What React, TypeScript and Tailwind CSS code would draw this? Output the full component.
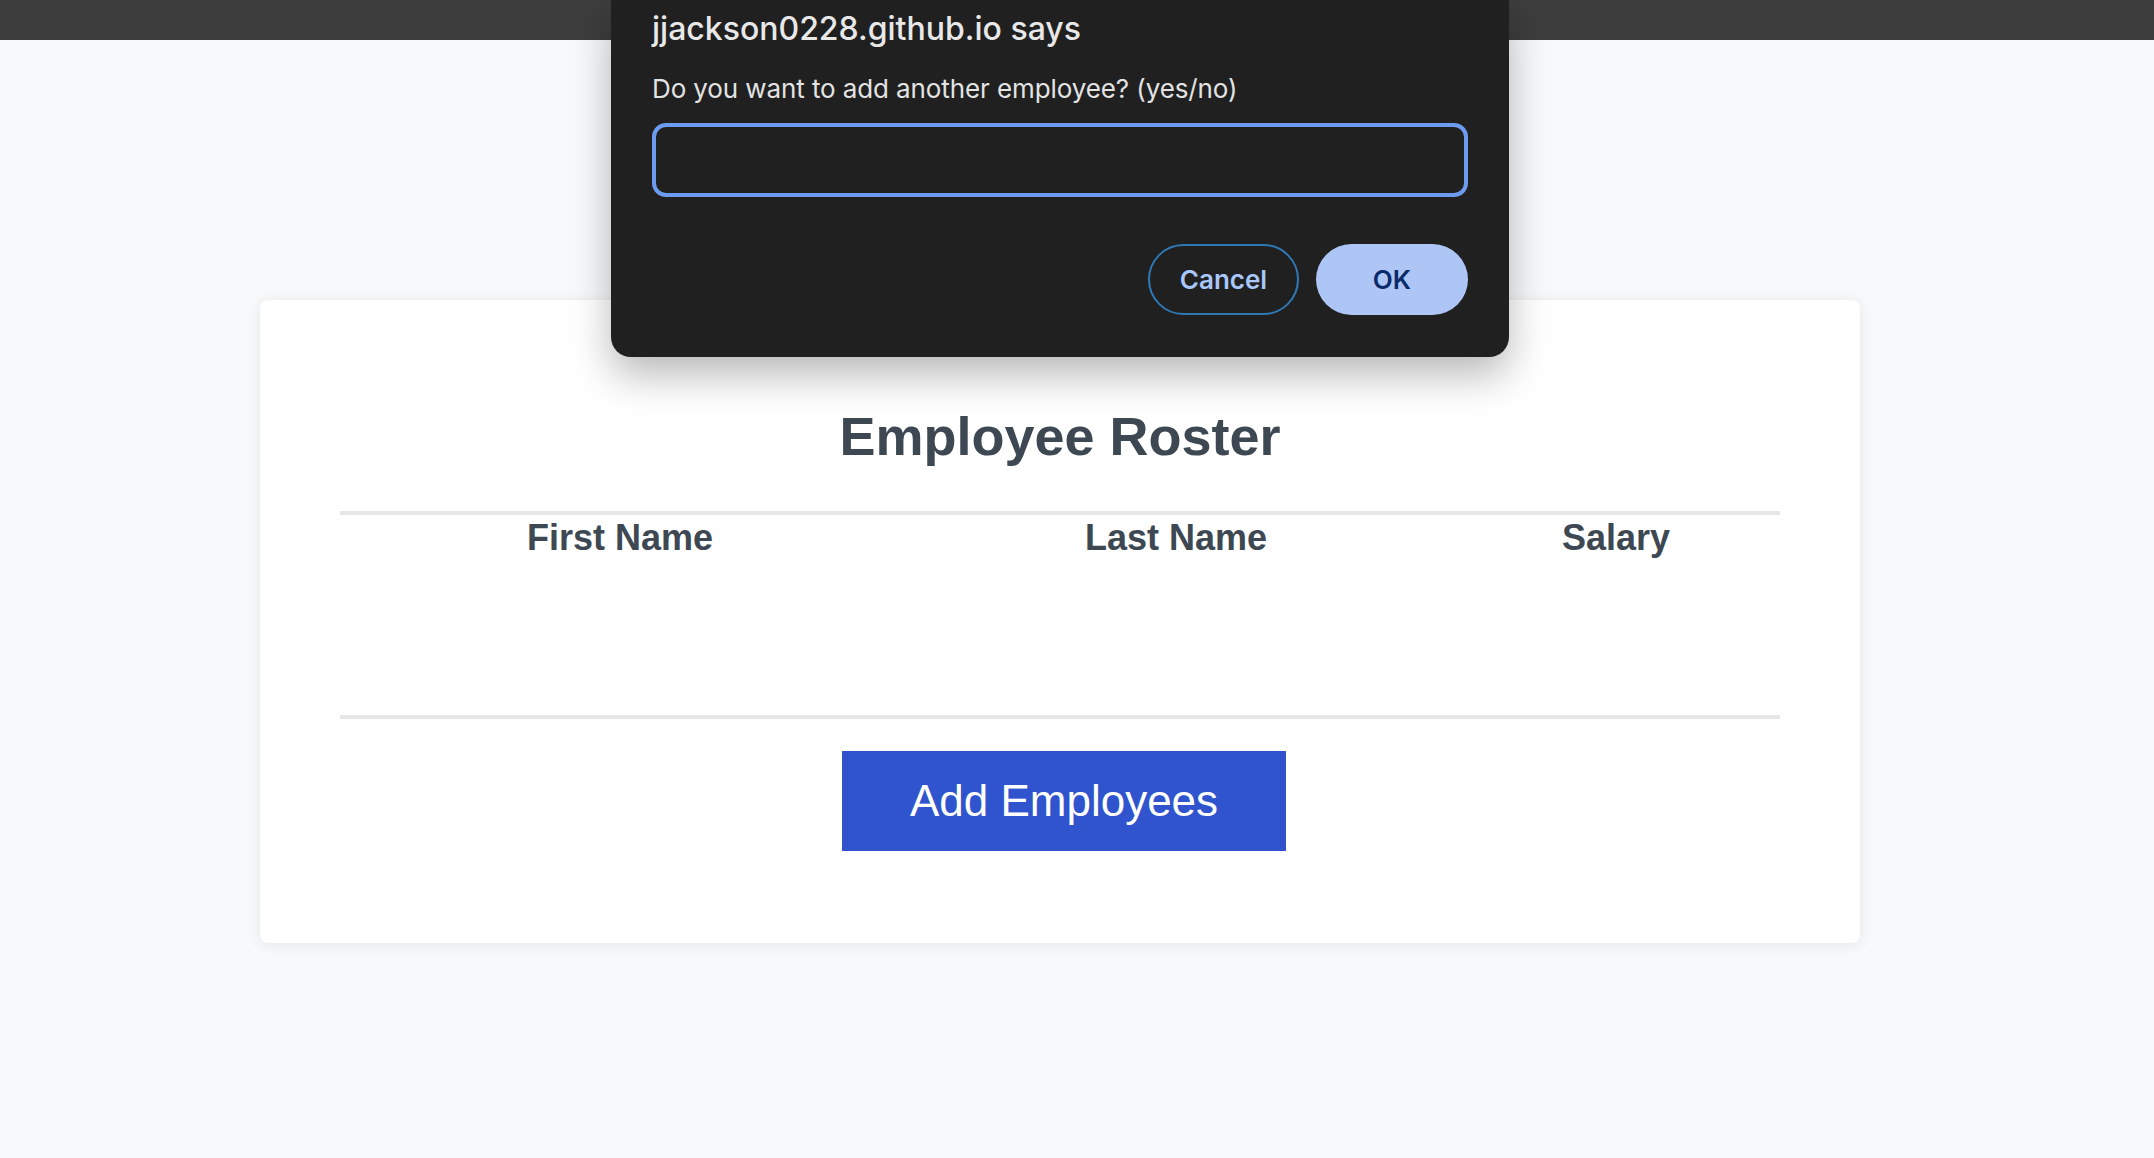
import React from "react"

const columns = ["First Name", "Last Name", "Salary"]

function PromptDialog() {
  return (
    <div className="absolute left-[611px] top-0 w-[898px] rounded-b-[20px] bg-[#202020] px-[41px] pt-[10px] pb-[42px] shadow-[0_18px_40px_rgba(0,0,0,0.28)] font-['Inter',sans-serif]">
      <h2 className="text-[32px] leading-[38px] font-medium text-[#e8e8e8]">jjackson0228.github.io says</h2>
      <p className="mt-[25px] text-[26px] leading-[32px] tracking-[-0.1px] text-[#e3e3e3]">
        Do you want to add another employee? (yes/no)
      </p>
      <input
        className="mt-[18px] block h-[74px] w-full rounded-[14px] border-[4px] border-[#6d9bef] bg-[#202020] px-4 text-[25px] text-[#e3e3e3] outline-none"
        autoFocus
      />
      <div className="mt-[47px] flex justify-end gap-[17px]">
        <button className="h-[71px] w-[151px] rounded-full border-2 border-[#2f78b3] text-[26px] font-semibold text-[#a8c7fa]">
          Cancel
        </button>
        <button className="h-[71px] w-[152px] rounded-full bg-[#adc6f5] text-[26px] font-semibold text-[#0b2a6a]">
          OK
        </button>
      </div>
    </div>
  )
}

export default function App() {
  return (
    <div className="relative min-h-[1158px] bg-[#f8f9fa] font-['Liberation_Sans',Arial,sans-serif]">
      <div className="h-[40px] bg-[#3d3d3d]" />

      <main className="pl-[260px] pt-[260px]">
        <section className="w-[1600px] rounded-[8px] bg-white px-[80px] pt-[104px] pb-[92px] shadow-[0_2px_14px_rgba(0,0,0,0.08)]">
          <h1 className="text-center text-[54px] leading-[64px] font-bold text-[#3d4852]">Employee Roster</h1>

          <div className="mt-[43px] border-t-[4px] border-b-[4px] border-[#e6e7e9] h-[208px]">
            <div className="grid grid-cols-[560px_552px_328px] pt-[1px] text-center text-[36px] leading-[44px] font-bold text-[#3d4852]">
              {columns.map((c) => (
                <div key={c}>{c}</div>
              ))}
            </div>
          </div>

          <div className="mt-[32px] flex justify-center pl-[8px]">
            <button className="h-[100px] w-[444px] bg-[#2f54cd] text-[44px] text-white">Add Employees</button>
          </div>
        </section>
      </main>

      <PromptDialog />
    </div>
  )
}
